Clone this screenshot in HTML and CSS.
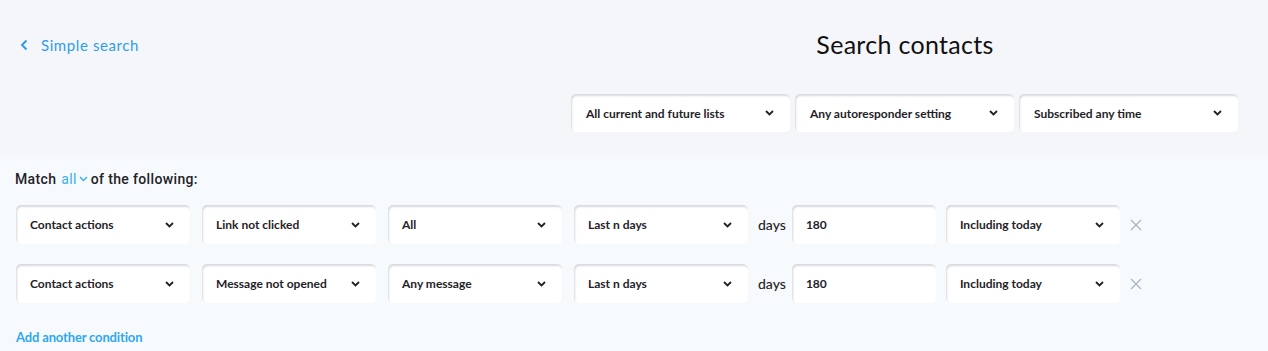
FILE: index.html
```html
<!DOCTYPE html>
<html>
<head>
<meta charset="utf-8">
<link rel="stylesheet" href="styles.css">
</head>
<body>
<header class="top">
  <div class="left">
    <a class="back" href="#">
      <svg class="back-ico" width="8" height="12" viewBox="0 0 8 12"><path d="M6.5 1.5 L2 6 L6.5 10.5" fill="none" stroke="#2f9cf0" stroke-width="2"/></svg>
      Simple search
    </a>
  </div>
  <div class="right">
    <h1 class="title">Search contacts</h1>
    <div class="filters">
      <div class="sel wide"><span>All current and future lists</span><svg class="chev" width="9" height="6" viewBox="0 0 9 6"><path d="M1 1 L4.5 4.5 L8 1" fill="none" stroke="#222" stroke-width="1.8"/></svg></div>
      <div class="sel wide"><span>Any autoresponder setting</span><svg class="chev" width="9" height="6" viewBox="0 0 9 6"><path d="M1 1 L4.5 4.5 L8 1" fill="none" stroke="#222" stroke-width="1.8"/></svg></div>
      <div class="sel wide"><span>Subscribed any time</span><svg class="chev" width="9" height="6" viewBox="0 0 9 6"><path d="M1 1 L4.5 4.5 L8 1" fill="none" stroke="#222" stroke-width="1.8"/></svg></div>
    </div>
  </div>
</header>
<main class="conds">
  <p class="match"><span class="m">Match</span><span class="all">all <svg width="9" height="6" viewBox="0 0 9 6"><path d="M1 1 L4.5 4.5 L8 1" fill="none" stroke="#3aaef0" stroke-width="1.5"/></svg></span>of the following:</p>
  <div class="row">
    <div class="sel"><span>Contact actions</span><svg class="chev" width="9" height="6" viewBox="0 0 9 6"><path d="M1 1 L4.5 4.5 L8 1" fill="none" stroke="#222" stroke-width="1.8"/></svg></div>
    <div class="sel"><span>Link not clicked</span><svg class="chev" width="9" height="6" viewBox="0 0 9 6"><path d="M1 1 L4.5 4.5 L8 1" fill="none" stroke="#222" stroke-width="1.8"/></svg></div>
    <div class="sel"><span>All</span><svg class="chev" width="9" height="6" viewBox="0 0 9 6"><path d="M1 1 L4.5 4.5 L8 1" fill="none" stroke="#222" stroke-width="1.8"/></svg></div>
    <div class="sel"><span>Last n days</span><svg class="chev" width="9" height="6" viewBox="0 0 9 6"><path d="M1 1 L4.5 4.5 L8 1" fill="none" stroke="#222" stroke-width="1.8"/></svg></div>
    <span class="days">days</span>
    <div class="sel num"><span>180</span></div>
    <div class="sel"><span>Including today</span><svg class="chev" width="9" height="6" viewBox="0 0 9 6"><path d="M1 1 L4.5 4.5 L8 1" fill="none" stroke="#222" stroke-width="1.8"/></svg></div>
    <svg class="x" width="12" height="12" viewBox="0 0 12 12"><path d="M1 1 L11 11 M11 1 L1 11" stroke="#a9b3bf" stroke-width="1.2"/></svg>
  </div>
  <div class="row">
    <div class="sel"><span>Contact actions</span><svg class="chev" width="9" height="6" viewBox="0 0 9 6"><path d="M1 1 L4.5 4.5 L8 1" fill="none" stroke="#222" stroke-width="1.8"/></svg></div>
    <div class="sel"><span>Message not opened</span><svg class="chev" width="9" height="6" viewBox="0 0 9 6"><path d="M1 1 L4.5 4.5 L8 1" fill="none" stroke="#222" stroke-width="1.8"/></svg></div>
    <div class="sel"><span>Any message</span><svg class="chev" width="9" height="6" viewBox="0 0 9 6"><path d="M1 1 L4.5 4.5 L8 1" fill="none" stroke="#222" stroke-width="1.8"/></svg></div>
    <div class="sel"><span>Last n days</span><svg class="chev" width="9" height="6" viewBox="0 0 9 6"><path d="M1 1 L4.5 4.5 L8 1" fill="none" stroke="#222" stroke-width="1.8"/></svg></div>
    <span class="days">days</span>
    <div class="sel num"><span>180</span></div>
    <div class="sel"><span>Including today</span><svg class="chev" width="9" height="6" viewBox="0 0 9 6"><path d="M1 1 L4.5 4.5 L8 1" fill="none" stroke="#222" stroke-width="1.8"/></svg></div>
    <svg class="x" width="12" height="12" viewBox="0 0 12 12"><path d="M1 1 L11 11 M11 1 L1 11" stroke="#a9b3bf" stroke-width="1.2"/></svg>
  </div>
  <a class="add" href="#">Add another condition</a>
</main>
</body>
</html>
```
FILE: styles.css
```css
* { box-sizing: border-box; }
html, body { margin: 0; padding: 0; }
body {
  width: 1268px;
  height: 351px;
  overflow: hidden;
  background: #f7fafc;
  font-family: "Lato", "Liberation Sans", sans-serif;
  color: #1f2328;
}
.top {
  height: 157px;
  background: #f5f6fa;
  display: flex;
}
.left {
  width: 570px;
  padding: 35px 0 0 20px;
}
.back {
  display: inline-flex;
  align-items: center;
  gap: 13px;
  color: #2f9cf0;
  text-decoration: none;
  font-size: 15px;
  letter-spacing: 0.6px;
}
.right {
  width: 670px;
  display: flex;
  flex-direction: column;
  align-items: center;
}
.title {
  margin: 28px 0 0;
  font-size: 25px;
  font-weight: 400;
  line-height: 32px;
  color: #111;
  letter-spacing: 0.3px;
}
.filters {
  margin-top: 34px;
  display: flex;
  gap: 5px;
  width: 670px;
  padding-left: 1px;
}
.sel {
  width: 174px;
  height: 39px;
  background: #fff;
  border-radius: 5px;
  box-shadow: inset 1px 2px 2px rgba(90, 100, 120, 0.24);
  display: flex;
  align-items: center;
  justify-content: space-between;
  padding: 0 16px 0 14px;
  font-size: 12px;
  font-weight: 700;
  color: #1f2328;
  flex: none;
}
.sel.wide { width: 219px; height: 38px; padding: 0 16px 0 15px; }
.sel.num { width: 144px; }
.chev { flex: none; }
.conds { padding: 13px 0 0 16px; }
.match {
  margin: 0 0 0 -1px;
  font-family: "Roboto", "Liberation Sans", sans-serif;
  font-size: 14px;
  font-weight: 500;
  line-height: 18px;
  color: #1f2328;
  letter-spacing: 0.35px;
}
.m { margin-right: 5px; }
.all {
  color: #3aaef0;
  font-weight: 400;
  display: inline-flex;
  align-items: center;
  gap: 2px;
  margin-right: 3px;
}
.row {
  display: flex;
  align-items: center;
  gap: 12px;
  margin-top: 17px;
}
.row + .row { margin-top: 20px; }
.days {
  font-size: 14px;
  font-weight: 500;
  margin: 0 -6px 0 -2px;
  color: #1f2328;
}
.row .sel.num + .sel { margin-left: -2px; }
.x { margin-left: -2px; flex: none; }
.add {
  display: inline-block;
  margin-top: 26px;
  color: #2ea8ef;
  font-size: 13px;
  font-weight: 700;
  text-decoration: none;
  letter-spacing: -0.15px;
}
```
